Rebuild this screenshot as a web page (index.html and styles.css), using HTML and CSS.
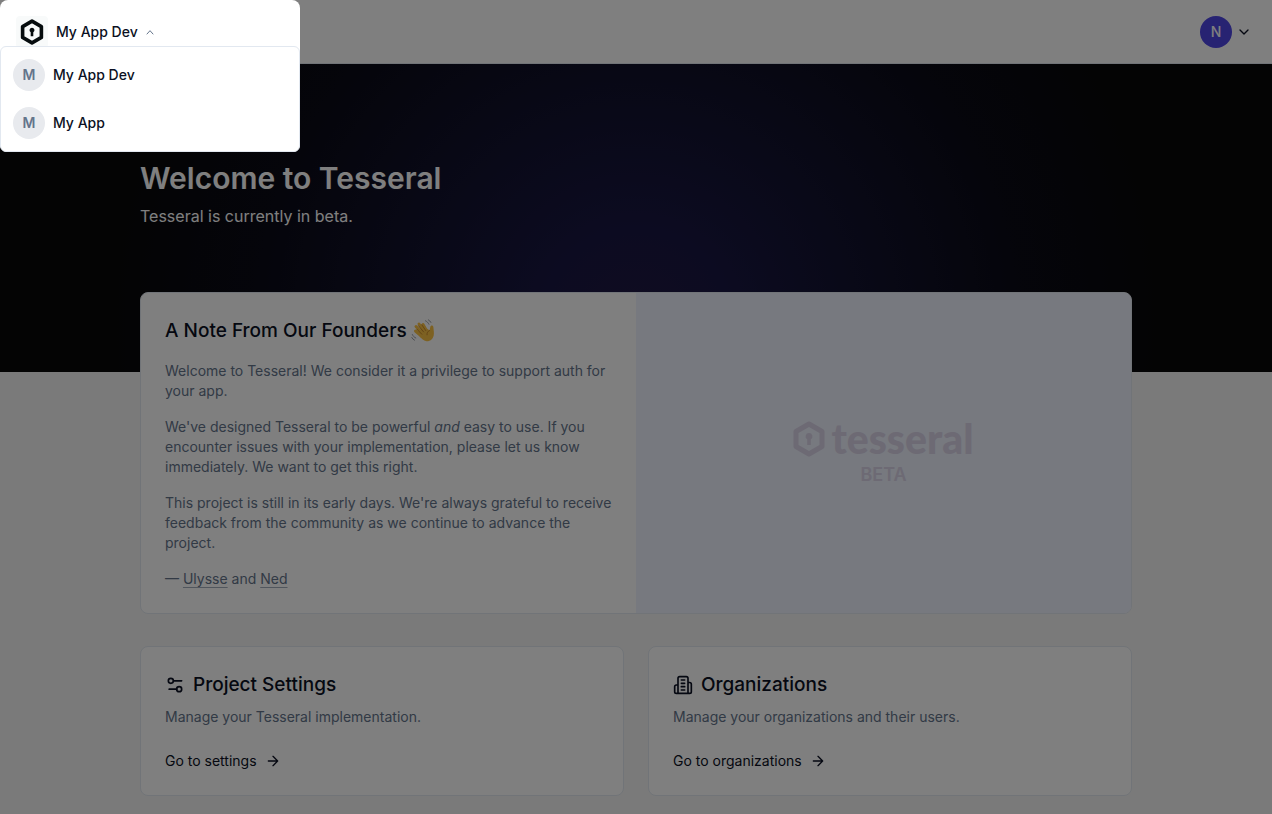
FILE: index.html
```html
<!DOCTYPE html>
<html lang="en">
<head>
<meta charset="utf-8">
<meta name="viewport" content="width=device-width, initial-scale=1">
<title>Tesseral</title>
<link rel="stylesheet" href="styles.css">
</head>
<body>
<header class="topbar">
  <button class="account" type="button" aria-label="Account menu">
    <span class="avatar avatar-user">N</span>
    <svg class="icon-sm" viewBox="0 0 24 24" aria-hidden="true"><path d="m6 9 6 6 6-6"/></svg>
  </button>
</header>

<div class="spotlight">
  <button class="brand" type="button" aria-expanded="true">
    <span class="brand-logo">
      <svg viewBox="0 0 32 36" aria-hidden="true"><path class="mark-ring" d="M16 3 29 10.500v15L16 33 3 25.500v-15z"/><path class="mark-key" d="M16 12a3.400 3.400 0 0 1 1.800 6.300V24h-3.600v-5.700A3.400 3.400 0 0 1 16 12z"/></svg>
    </span>
    <span>My App Dev</span>
    <svg class="icon-caret" viewBox="0 0 24 24" aria-hidden="true"><path d="m3 18 9-10 9 10"/></svg>
  </button>
  <div class="menu" role="menu">
    <button class="menu-item" type="button" role="menuitem"><span class="avatar">M</span><span>My App Dev</span></button>
    <button class="menu-item" type="button" role="menuitem"><span class="avatar">M</span><span>My App</span></button>
  </div>
</div>

<section class="hero">
  <div class="container">
    <h1 class="hero-title">Welcome to Tesseral</h1>
    <p class="hero-text">Tesseral is currently in beta.</p>
  </div>
</section>

<main class="container content">
  <section class="card note">
    <div class="note-body">
      <h2 class="card-title note-title">A Note From Our Founders
        <svg class="wave" viewBox="0 0 24 24" role="img" aria-label="Waving hand">
          <path class="wave-hand" d="M8 12.500C10 9 15 8 18.500 11.500L19.300 8c.3-2.200 3-2 3.100.2.200 3 .9 5.800.3 8.300-.9 4-4 6-7.200 5.700-3-.3-5.500-3-7.500-5.700z"/>
          <path class="wave-fingers" d="M11 17.500 4.500 12M12 15 5 7.500M14 13.500 8 5M16 12.500 12 5.500"/>
          <path class="wave-crease" d="M10.800 15.200 6 10.300M12.600 12.900 7.500 6.800M14.800 11.600 10.800 5.800M18.500 11.500c-1.700.8-2.700 2.400-2.500 4.300"/>
          <path class="wave-line" d="M14.500 1.800c1.500.7 2.700 1.900 3.400 3.400M17.300.8c1.100.6 2 1.500 2.600 2.600M1.300 15.500c.7 1.600 1.900 2.800 3.500 3.500M.8 18.500c.6 1.200 1.500 2.100 2.700 2.700"/>
        </svg>
      </h2>
      <p>Welcome to Tesseral! We consider it a privilege to support auth for your app.</p>
      <p>We've designed Tesseral to be powerful <em>and</em> easy to use. If you encounter issues with your implementation, please let us know immediately. We want to get this right.</p>
      <p>This project is still in its early days. We're always grateful to receive feedback from the community as we continue to advance the project.</p>
      <p>— <a class="text-link" href="#">Ulysse</a> and <a class="text-link" href="#">Ned</a></p>
    </div>
    <div class="note-art">
      <div class="wordmark">
        <svg class="wordmark-logo" viewBox="0 0 32 36" aria-hidden="true"><path class="mark-ring" d="M16 3 29 10.500v15L16 33 3 25.500v-15z"/><path class="mark-key" d="M16 12a3.400 3.400 0 0 1 1.800 6.300V24h-3.600v-5.700A3.400 3.400 0 0 1 16 12z"/></svg>
        <span>tesseral</span>
      </div>
      <div class="beta">BETA</div>
    </div>
  </section>

  <div class="cards">
    <section class="card tile">
      <h2 class="card-title">
        <svg class="icon-md" viewBox="0 0 24 24" aria-hidden="true"><path d="M20 7h-9M14 17H5"/><circle cx="17" cy="17" r="3"/><circle cx="7" cy="7" r="3"/></svg>
        Project Settings
      </h2>
      <p>Manage your Tesseral implementation.</p>
      <a class="go" href="#">Go to settings
        <svg class="icon-sm" viewBox="0 0 24 24" aria-hidden="true"><path d="M5 12h14M12 5l7 7-7 7"/></svg></a>
    </section>
    <section class="card tile">
      <h2 class="card-title">
        <svg class="icon-md" viewBox="0 0 24 24" aria-hidden="true"><path d="M6 22V4a2 2 0 0 1 2-2h8a2 2 0 0 1 2 2v18ZM6 12H4a2 2 0 0 0-2 2v6a2 2 0 0 0 2 2h2M18 9h2a2 2 0 0 1 2 2v9a2 2 0 0 1-2 2h-2M10 6h4M10 10h4M10 14h4M10 18h4"/></svg>
        Organizations
      </h2>
      <p>Manage your organizations and their users.</p>
      <a class="go" href="#">Go to organizations
        <svg class="icon-sm" viewBox="0 0 24 24" aria-hidden="true"><path d="M5 12h14M12 5l7 7-7 7"/></svg></a>
    </section>
  </div>
</main>
</body>
</html>
```
FILE: styles.css
```css
* { box-sizing: border-box; }
body {
  margin: 0;
  overflow-x: hidden;
  background: #f5f5f5;
  color: #0b1023;
  font: 14px/20px Inter, "Liberation Sans", sans-serif;
}
h1, h2, p { margin: 0; }
button { border: 0; padding: 0; background: none; color: inherit; font: inherit; cursor: pointer; }
svg { flex: none; fill: none; stroke: currentColor; stroke-width: 2; stroke-linecap: round; stroke-linejoin: round; }
.icon-sm { width: 16px; height: 16px; }
.icon-md { width: 20px; height: 20px; }
.icon-caret { width: 8px; height: 8px; stroke-width: 3; color: #64748b; }
.mark-ring { stroke-width: 5; stroke-linejoin: round; }
.mark-key { fill: currentColor; stroke: none; }

.topbar {
  display: flex;
  justify-content: flex-end;
  align-items: center;
  height: 64px;
  padding: 0 20px;
  background: #fff;
  border-bottom: 1px solid #e2e8f0;
}
.account { display: flex; align-items: center; gap: 4px; }
.avatar {
  display: flex;
  justify-content: center;
  align-items: center;
  width: 32px;
  height: 32px;
  border-radius: 50%;
  background: #e8eaee;
  color: #64748b;
  font-weight: 600;
}
.avatar-user { background: #4f46e5; color: #fff; font-weight: 500; }

/* Highlighted switcher; its spread shadow dims the rest of the page. */
.spotlight {
  position: absolute;
  top: 0;
  left: 0;
  z-index: 1;
  width: 300px;
  padding-top: 16px;
  border-radius: 8px;
  background: #fff;
  box-shadow: 0 0 0 3000px rgba(0, 0, 0, .5);
  font-weight: 500;
}
.brand { display: flex; align-items: center; gap: 8px; height: 32px; margin-left: 16px; }
.brand-logo {
  display: flex;
  justify-content: center;
  align-items: center;
  width: 32px;
  height: 32px;
  border-radius: 4px;
  background: #f8fafa;
}
.brand-logo svg { width: 24px; height: 26px; color: #060c0e; }
.menu {
  position: relative;
  margin-top: -2px;
  padding: 4px;
  border: 1px solid #e2e8f0;
  border-radius: 6px;
  background: #fff;
}
.menu-item { display: flex; align-items: center; gap: 8px; width: 100%; padding: 8px; }

.container { width: calc(100% - 32px); max-width: 992px; margin: 0 auto; }
.hero {
  padding: 96px 0 144px;
  background: radial-gradient(circle at 50% 84%, #201843 0, #191743 90px, #12122f 220px, #0a0a16 380px, #080809 520px);
  color: #fff;
}
.hero-title { font-size: 30px; line-height: 36px; font-weight: 600; }
.hero-text { margin-top: 8px; font-size: 16px; line-height: 24px; }

.content { display: flex; flex-direction: column; gap: 32px; margin-top: -80px; padding-bottom: 18px; }
.card { border: 1px solid #e2e8f0; border-radius: 8px; background: #fff; color: #64748b; }
.card-title {
  display: flex;
  align-items: center;
  gap: 8px;
  color: #0b1023;
  font-size: 19px;
  line-height: 28px;
  font-weight: 500;
}
.note { display: grid; grid-template-columns: 1fr 1fr; overflow: hidden; }
.note-body { display: flex; flex-direction: column; gap: 16px; padding: 24px; }
.note-title { gap: 4px; }
.wave { width: 24px; height: 24px; }
.wave-hand { fill: #fbc244; stroke: none; }
.wave-fingers { stroke: #fbc244; stroke-width: 3; }
.wave-crease { stroke: #c98a2c; stroke-width: 1; }
.wave-line { stroke: #9a9ea6; stroke-width: 1; }
.text-link {
  color: inherit;
  text-decoration: underline;
  text-decoration-color: #a3acba;
  text-underline-offset: 3px;
}
.note-art {
  display: flex;
  flex-direction: column;
  justify-content: center;
  align-items: center;
  gap: 8px;
  background: #eef2fe;
  color: #dad4e8;
}
.wordmark { display: flex; align-items: center; gap: 6px; font: 900 41px/36px Lato, sans-serif; }
.wordmark-logo { width: 32px; height: 36px; }
.beta { font-size: 18px; font-weight: 600; }

.cards { display: grid; grid-template-columns: 1fr 1fr; gap: 24px; }
.tile { display: flex; flex-direction: column; align-items: flex-start; gap: 8px; padding: 24px; }
.go {
  display: flex;
  align-items: center;
  gap: 8px;
  margin-top: 16px;
  color: #0b1023;
  text-decoration: none;
}
```
